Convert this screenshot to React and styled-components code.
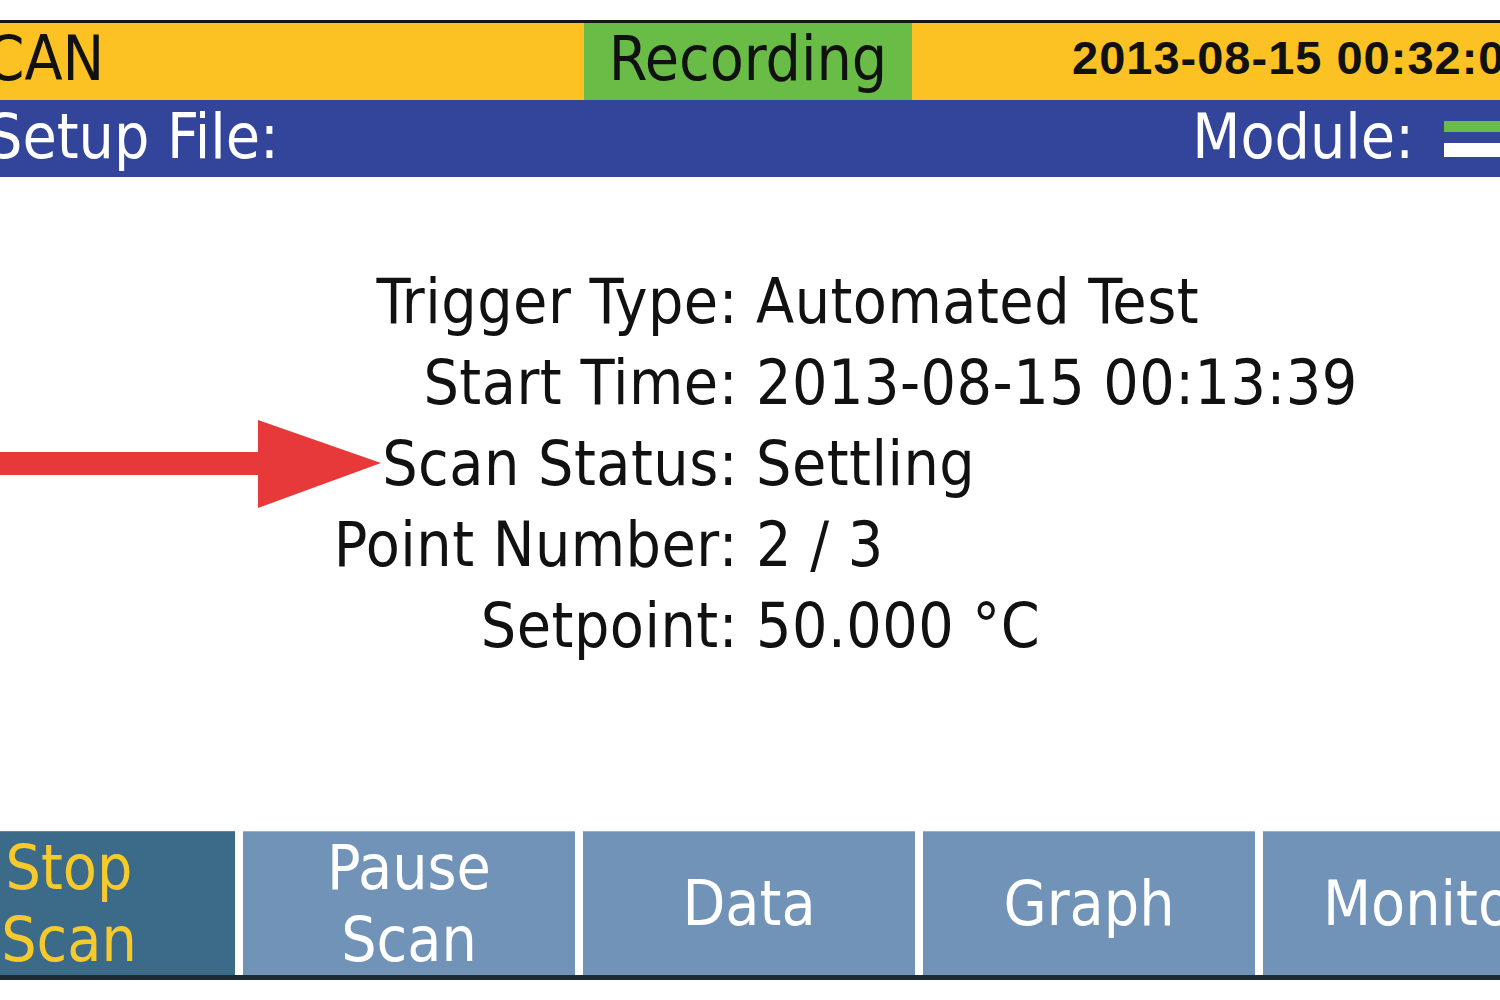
import React from "react";
import styled, { createGlobalStyle } from "styled-components";

const GlobalStyle = createGlobalStyle`
  html, body {
    margin: 0;
    padding: 0;
    background: #ffffff;
  }
  body {
    font-family: "DejaVu Sans Condensed", "DejaVu Sans", sans-serif;
  }
`;

const Screen = styled.div`
  width: 1500px;
  height: 1000px;
  overflow: hidden;
  display: flex;
  flex-direction: column;
  padding-top: 20px;
  box-sizing: border-box;
  background: #ffffff;
`;

const StatusBar = styled.div`
  height: 77px;
  border-top: 3px solid #161616;
  background: #fcc224;
  display: flex;
  align-items: stretch;
  color: #111;
`;

const Mode = styled.div`
  width: 584px;
  display: flex;
  align-items: center;
  font-size: 62px;
  margin-top: -6px;
  text-indent: -50px;
  white-space: nowrap;
  overflow: hidden;
`;

const RecordBox = styled.div`
  width: 328px;
  background: #69bd47;
  display: flex;
  align-items: center;
  justify-content: center;
  font-size: 62px;
  padding-bottom: 6px;
  box-sizing: border-box;
`;

const Clock = styled.div`
  flex: 1;
  display: flex;
  align-items: center;
  padding-left: 160px;
  padding-bottom: 8px;
  font-family: "Liberation Sans", Arial, sans-serif;
  font-weight: bold;
  font-size: 47px;
  letter-spacing: 1px;
  white-space: nowrap;
  overflow: hidden;
`;

const InfoBar = styled.div`
  height: 77px;
  background: #33459b;
  color: #ffffff;
  display: flex;
  align-items: center;
  justify-content: space-between;
  font-size: 62px;
  white-space: nowrap;
  overflow: hidden;
  padding-bottom: 4px;
  box-sizing: border-box;
`;

const SetupLabel = styled.span`
  margin-left: -13px;
`;

const ModuleWrap = styled.div`
  display: flex;
  align-items: center;
  gap: 30px;
`;

const ModuleIcon = styled.div`
  width: 56px;
  height: 36px;
  display: flex;
  flex-direction: column;
  justify-content: space-between;
  margin-top: 4px;
`;

const IconBar = styled.span`
  display: block;
  height: ${(p) => p.$h}px;
  background: ${(p) => p.$color};
`;

const Body = styled.div`
  position: relative;
  flex: 1;
  padding-top: 84px;
  box-sizing: border-box;
`;

const Fields = styled.div`
  display: grid;
  grid-template-columns: 738px 1fr;
  grid-auto-rows: 81px;
  align-items: center;
  font-size: 62px;
  letter-spacing: 0.5px;
  color: #111;
  white-space: nowrap;
`;

const Label = styled.div`
  text-align: right;
`;

const Value = styled.div`
  padding-left: 18px;
`;

const Arrow = styled.svg`
  position: absolute;
  left: 0;
  top: 243px;
`;

const SoftKeys = styled.div`
  height: 149px;
  display: flex;
  gap: 8px;
  margin-left: -97px;
  border-bottom: 5px solid #1f2a36;
  box-sizing: border-box;
  margin-bottom: 20px;
`;

const SoftKey = styled.div`
  flex: 0 0 332px;
  background: ${(p) => (p.$active ? "#3c6b8a" : "#7193b8")};
  color: ${(p) => (p.$active ? "#f6c92c" : "#ffffff")};
  border-top: 1px solid ${(p) => (p.$active ? "#5a86a3" : "#9bb2cc")};
  display: flex;
  align-items: center;
  justify-content: center;
  text-align: center;
  font-size: 62px;
  line-height: 72px;
  white-space: nowrap;
  overflow: hidden;
`;

const fields = [
  ["Trigger Type:", "Automated Test"],
  ["Start Time:", "2013-08-15 00:13:39"],
  ["Scan Status:", "Settling"],
  ["Point Number:", "2 / 3"],
  ["Setpoint:", "50.000 °C"],
];

const keys = [
  { label: ["Stop", "Scan"], active: true },
  { label: ["Pause", "Scan"] },
  { label: ["Data"] },
  { label: ["Graph"] },
  { label: ["Monitor"] },
];

const App = () => {
  return (
    <>
      <GlobalStyle />
      <Screen>
        <StatusBar>
          <Mode>SCAN</Mode>
          <RecordBox>Recording</RecordBox>
          <Clock>2013-08-15 00:32:03</Clock>
        </StatusBar>
        <InfoBar>
          <SetupLabel>Setup File:</SetupLabel>
          <ModuleWrap>
            <span>Module:</span>
            <ModuleIcon>
              <IconBar $h={11} $color="#69bd47" />
              <IconBar $h={14} $color="#ffffff" />
            </ModuleIcon>
          </ModuleWrap>
        </InfoBar>
        <Body>
          {/* red annotation arrow pointing at the scan status row */}
          <Arrow width="385" height="88" viewBox="0 0 385 88">
            <rect x="0" y="32" width="262" height="23" fill="#e8393a" />
            <polygon points="258,0 381,43 258,88" fill="#e8393a" />
          </Arrow>
          <Fields>
            {fields.map(([label, value]) => (
              <React.Fragment key={label}>
                <Label>{label}</Label>
                <Value>{value}</Value>
              </React.Fragment>
            ))}
          </Fields>
        </Body>
        <SoftKeys>
          {keys.map((k) => (
            <SoftKey key={k.label.join(" ")} $active={k.active}>
              <div>
                {k.label.map((line) => (
                  <div key={line}>{line}</div>
                ))}
              </div>
            </SoftKey>
          ))}
        </SoftKeys>
      </Screen>
    </>
  );
};

export default App;
